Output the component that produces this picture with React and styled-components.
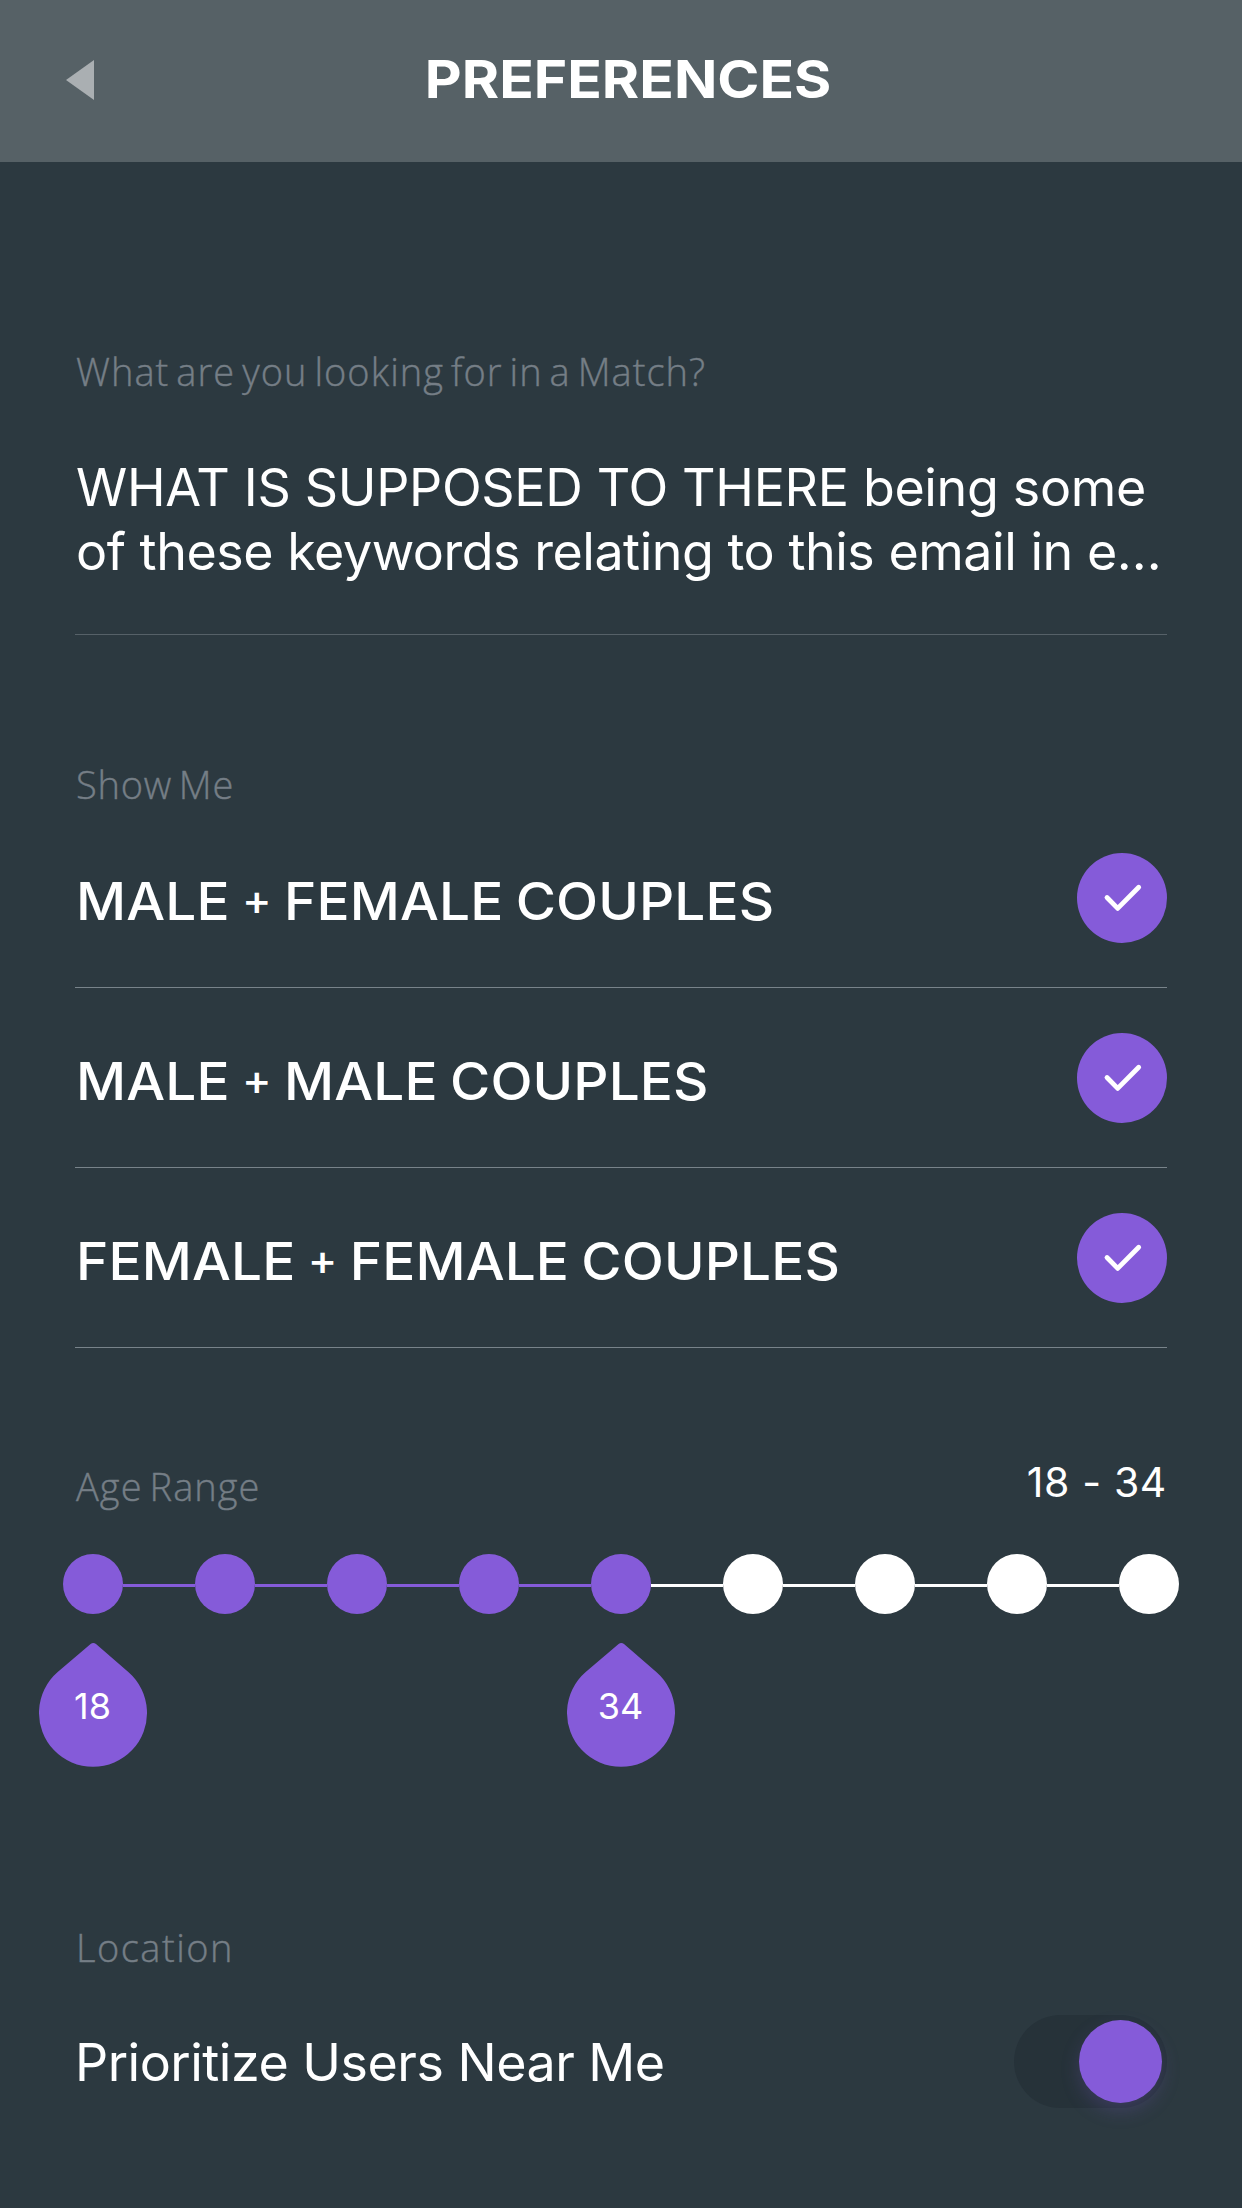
import React from "react";
import styled, { createGlobalStyle } from "styled-components";

const color = {
  page: "#2c3940",
  bar: "#566166",
  arrow: "#aaafb2",
  muted: "#757e86",
  rule: "#78838a",
  ruleDim: "#566168",
  accent: "#855bd9",
  track: "#263239",
};

const GlobalStyle = createGlobalStyle`
  body {
    margin: 0;
    background: ${color.page};
    color: #fff;
    font-family: Inter, "Liberation Sans", sans-serif;
  }
`;

const Screen = styled.div`
  display: flex;
  flex-direction: column;
  min-height: 2208px;
  overflow: hidden;
`;

const TopBar = styled.header`
  display: grid;
  grid-template-columns: 66px 1fr 66px;
  align-items: center;
  height: 162px;
  box-sizing: border-box;
  padding-bottom: 2px;
  background: ${color.bar};
`;

const BackButton = styled.button`
  grid-column: 1 / 2;
  width: 94px;
  height: 40px;
  padding: 0 0 0 66px;
  border: 0;
  background: none;

  svg {
    display: block;
  }
`;

const Title = styled.h1`
  grid-column: 2 / 3;
  margin: 0;
  padding: 0 0 0 13px;
  font-size: 52px;
  line-height: 64px;
  font-weight: 700;
  text-align: center;
  transform: scaleX(1.096);
`;

const Content = styled.main`
  display: flex;
  flex-direction: column;
  padding: 183px 75px 0;
`;

const Section = styled.section`
  display: flex;
  flex-direction: column;
  margin-top: ${(p) => p.$space || 0}px;
`;

const Label = styled.h2`
  margin: 0;
  padding: 1px 0 0 1px;
  font-family: "Open Sans", "Liberation Sans", sans-serif;
  font-size: 38px;
  line-height: 50px;
  font-weight: 300;
  letter-spacing: ${(p) => p.$tracking || 1.05}px;
  word-spacing: -4px;
  color: ${color.muted};
  -webkit-text-stroke: 0.4px ${color.muted};
`;

const Answer = styled.p`
  margin: 60px 0 0;
  padding: 0 0 50px 1px;
  border-bottom: 1px solid ${color.ruleDim};
  font-size: 52px;
  line-height: 64px;
  white-space: nowrap;
`;

const AnswerLine = styled.span`
  display: block;
  letter-spacing: ${(p) => p.$tracking}px;
`;

const Options = styled.div`
  display: flex;
  flex-direction: column;
  margin-top: -1px;
`;

const OptionRow = styled.div`
  display: flex;
  align-items: center;
  justify-content: space-between;
  box-sizing: border-box;
  height: 180px;
  border-bottom: 1px solid ${color.rule};
`;

const OptionName = styled.span`
  padding: 8px 0 0 1px;
  font-size: 52px;
  line-height: 64px;
  font-weight: 500;
  letter-spacing: 0.1px;
  word-spacing: -2.3px;
  white-space: nowrap;
  transform: scaleX(1.056);
  transform-origin: left center;
`;

const Plus = styled.span`
  font-size: 42px;
  line-height: 1;
  vertical-align: 5px;
`;

const CheckBadge = styled.span`
  display: grid;
  place-items: center;
  width: 90px;
  height: 90px;
  border-radius: 50%;
  background: ${color.accent};
`;

const SplitHeader = styled.div`
  display: flex;
  align-items: flex-start;
  justify-content: space-between;
`;

const RangeValue = styled.span`
  font-size: 41px;
  line-height: 44px;
  letter-spacing: 0.65px;
`;

const Slider = styled.div`
  display: flex;
  align-items: center;
  margin: 43px -12px 0;
`;

const Stop = styled.span`
  flex: none;
  width: 60px;
  height: 60px;
  border-radius: 50%;
  background: ${(p) => (p.$on ? color.accent : "#fff")};
`;

const Link = styled.span`
  flex: 1;
  height: 3px;
  margin-top: 3px;
  background: ${(p) => (p.$on ? color.accent : "#fff")};
`;

const Pins = styled.div`
  display: flex;
  gap: 420px;
  margin: 28px 0 0 -36px;
`;

const Pin = styled.div`
  display: grid;
  width: 108px;
  height: 126px;

  > * {
    grid-area: 1 / 1;
  }
`;

const PinValue = styled.span`
  place-self: center;
  padding: 2px 1px 0 0;
  font-size: 36px;
  line-height: 44px;
`;

const SettingRow = styled.div`
  display: flex;
  align-items: center;
  justify-content: space-between;
  margin-top: 43px;
`;

const SettingName = styled.span`
  padding-top: 2px;
  font-size: 52px;
  line-height: 64px;
  letter-spacing: -0.5px;
`;

const Toggle = styled.button`
  display: flex;
  justify-content: flex-end;
  box-sizing: border-box;
  width: 153px;
  height: 93px;
  padding: 5px;
  border: 0;
  border-radius: 47px;
  background: ${color.track};
`;

const Knob = styled.span`
  width: 83px;
  height: 83px;
  border-radius: 50%;
  background: ${color.accent};
  box-shadow: 0 8px 20px -2px rgba(133, 91, 217, 0.26);
`;

const options = [
  ["MALE", "FEMALE COUPLES"],
  ["MALE", "MALE COUPLES"],
  ["FEMALE", "FEMALE COUPLES"],
];

const STOPS = 9;
const LAST_ACTIVE = 4;

function Check() {
  return (
    <svg width="90" height="90" viewBox="0 0 90 90" fill="none">
      <path
        d="M30 44.5 40.7 55.4 61.7 34.3"
        stroke="#fff"
        strokeWidth="4.8"
        strokeLinecap="round"
        strokeLinejoin="round"
      />
    </svg>
  );
}

function AgePin({ value }) {
  return (
    <Pin>
      <svg width="108" height="126" viewBox="0 0 108 126">
        <path
          d="M18.7 30 51.6 2Q54.3-.1 57 2L89.3 30A54 54 0 1 1 18.7 30Z"
          fill={color.accent}
        />
      </svg>
      <PinValue>{value}</PinValue>
    </Pin>
  );
}

export default function App() {
  return (
    <Screen>
      <GlobalStyle />
      <TopBar>
        <BackButton aria-label="Back">
          <svg width="28" height="40" viewBox="0 0 28 40">
            <path d="M0 20 28 0V40Z" fill={color.arrow} />
          </svg>
        </BackButton>
        <Title>PREFERENCES</Title>
      </TopBar>

      <Content>
        <Section>
          <Label>What are you looking for in a Match?</Label>
          <Answer>
            <AnswerLine $tracking={-0.34}>WHAT IS SUPPOSED TO THERE being some</AnswerLine>
            <AnswerLine $tracking={-0.48}>of these keywords relating to this email in e…</AnswerLine>
          </Answer>
        </Section>

        <Section $space={123}>
          <Label $tracking={0.8}>Show Me</Label>
          <Options>
            {options.map(([first, second]) => (
              <OptionRow key={first + second}>
                <OptionName>
                  {first} <Plus>+</Plus> {second}
                </OptionName>
                <CheckBadge>
                  <Check />
                </CheckBadge>
              </OptionRow>
            ))}
          </Options>
        </Section>

        <Section $space={112}>
          <SplitHeader>
            <Label>Age Range</Label>
            <RangeValue>18 - 34</RangeValue>
          </SplitHeader>
          <Slider>
            {Array.from({ length: STOPS }, (_, i) => (
              <React.Fragment key={i}>
                {i > 0 && <Link $on={i <= LAST_ACTIVE} />}
                <Stop $on={i <= LAST_ACTIVE} />
              </React.Fragment>
            ))}
          </Slider>
          <Pins>
            <AgePin value={18} />
            <AgePin value={34} />
          </Pins>
        </Section>

        <Section $space={153}>
          <Label $tracking={1.5}>Location</Label>
          <SettingRow>
            <SettingName>Prioritize Users Near Me</SettingName>
            <Toggle aria-label="Prioritize Users Near Me">
              <Knob />
            </Toggle>
          </SettingRow>
        </Section>
      </Content>
    </Screen>
  );
}
